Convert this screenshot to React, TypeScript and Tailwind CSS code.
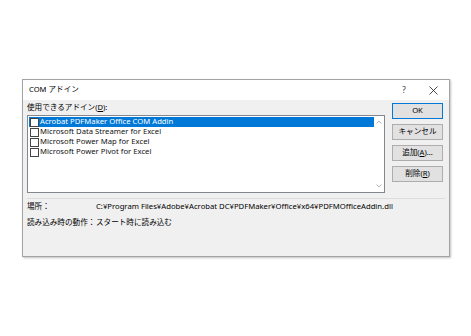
import React from "react";

const font = { fontFamily: '"Noto Sans", "Noto Sans CJK JP", sans-serif' };

function Btn({ children, primary }: { children: React.ReactNode; primary?: boolean }) {
  return (
    <div
      className={
        "h-[16px] w-[51px] flex items-center justify-center text-[7.6px] leading-none text-black bg-[#e1e1e1] border " +
        (primary ? "border-[#0078d7]" : "border-[#adadad]")
      }
    >
      {children}
    </div>
  );
}

export default function App() {
  const items = [
    "Acrobat PDFMaker Office COM Addin",
    "Microsoft Data Streamer for Excel",
    "Microsoft Power Map for Excel",
    "Microsoft Power Pivot for Excel",
  ];
  return (
    <div className="w-[471px] h-[336px] bg-white pt-[79px] pl-[22px]" style={font}>
      <div className="w-[428px] h-[178px] border border-[#a3a3a3] bg-[#f0f0f0] shadow-[1px_1px_2px_rgba(0,0,0,0.25)] flex flex-col">
        {/* title bar */}
        <div className="h-[20px] bg-white flex items-center pl-[6px] pr-[10px] text-[7.6px] text-black">
          <span className="flex-1">COM アドイン</span>
          <span className="w-[12px] text-center text-[8px] text-[#333] mr-[19px]">?</span>
          <svg width="9" height="9" viewBox="0 0 9 9" className="mr-[1px]">
            <path d="M0.5 0.5 L8.5 8.5 M8.5 0.5 L0.5 8.5" stroke="#333" strokeWidth="0.9" fill="none" />
          </svg>
        </div>
        {/* body */}
        <div className="flex pl-[4px] pr-[5px]">
          <div className="flex flex-col w-[358px]">
            <div className="h-[10px] mt-[3px] flex items-center text-[7.6px] text-black leading-none">
              使用できるアドイン(<span className="underline">D</span>):
            </div>
            <div className="mt-[2px] h-[78px] bg-white border border-[#828790] flex p-[1px]">
              <div className="flex-1 flex flex-col">
                {items.map((t, i) => (
                  <div
                    key={t}
                    className={
                      "h-[10px] flex items-center text-[7.7px] leading-none " +
                      (i === 0 ? "bg-[#0078d7] text-white" : "text-[#111]")
                    }
                  >
                    <div className="w-[9px] h-[9px] ml-[1px] border border-[#444] bg-white shrink-0" />
                    <span className="ml-[1px] whitespace-nowrap">{t}</span>
                  </div>
                ))}
              </div>
              <div className="w-[9px] flex flex-col justify-between items-center py-[3px]">
                <svg width="6" height="4" viewBox="0 0 6 4">
                  <path d="M0.5 3.5 L3 1 L5.5 3.5" stroke="#a0a0a0" strokeWidth="0.8" fill="none" />
                </svg>
                <svg width="6" height="4" viewBox="0 0 6 4">
                  <path d="M0.5 0.5 L3 3 L5.5 0.5" stroke="#a0a0a0" strokeWidth="0.8" fill="none" />
                </svg>
              </div>
            </div>
          </div>
          <div className="ml-[7px] mt-[3px] flex flex-col gap-[5px]">
            <Btn primary>OK</Btn>
            <Btn>キャンセル</Btn>
            <Btn>
              追加(<span className="underline">A</span>)...
            </Btn>
            <Btn>
              削除(<span className="underline">R</span>)
            </Btn>
          </div>
        </div>
        <div className="mx-[4px] mt-[5px] h-px bg-[#dcdcdc]" />
        <div className="pl-[4px] mt-[3px] flex flex-col gap-[6px] text-[7.6px] text-black leading-none">
          <div className="h-[10px] flex items-center">
            <span className="w-[69px] shrink-0 whitespace-nowrap">場所：</span>
            <span className="whitespace-nowrap text-[7.7px]">C:¥Program Files¥Adobe¥Acrobat DC¥PDFMaker¥Office¥x64¥PDFMOfficeAddin.dll</span>
          </div>
          <div className="h-[10px] flex items-center">
            <span className="w-[69px] shrink-0 whitespace-nowrap">読み込み時の動作：</span>
            <span className="whitespace-nowrap">スタート時に読み込む</span>
          </div>
        </div>
      </div>
    </div>
  );
}
